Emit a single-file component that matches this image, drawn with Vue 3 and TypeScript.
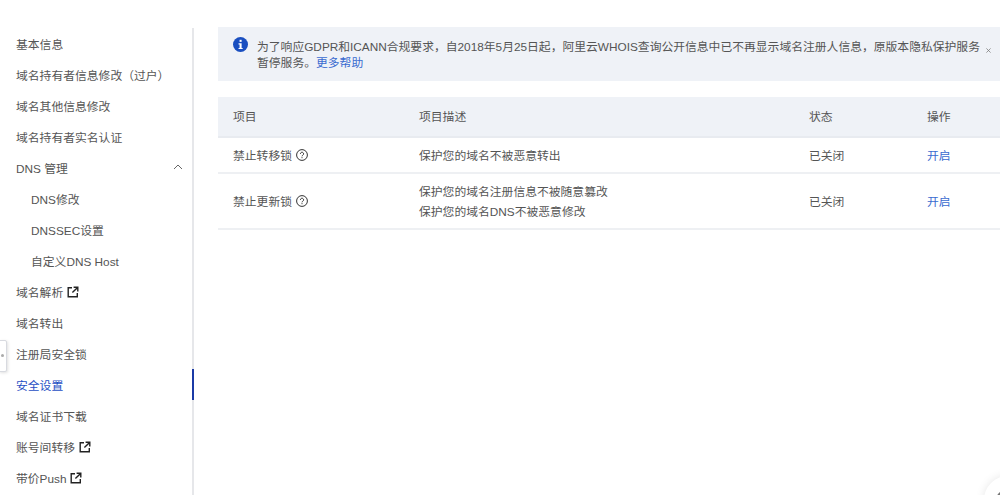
<script setup lang="ts">
interface NavItem { label: string; sub?: boolean; ext?: boolean; active?: boolean; caret?: boolean }
const nav: NavItem[] = [
  { label: '基本信息' },
  { label: '域名持有者信息修改（过户）' },
  { label: '域名其他信息修改' },
  { label: '域名持有者实名认证' },
  { label: 'DNS 管理', caret: true },
  { label: 'DNS修改', sub: true },
  { label: 'DNSSEC设置', sub: true },
  { label: '自定义DNS Host', sub: true },
  { label: '域名解析', ext: true },
  { label: '域名转出' },
  { label: '注册局安全锁' },
  { label: '安全设置', active: true },
  { label: '域名证书下载' },
  { label: '账号间转移', ext: true },
  { label: '带价Push', ext: true },
]
</script>

<template>
  <div class="page">
    <aside class="side">
      <a v-for="n in nav" :key="n.label" class="item" :class="{ sub: n.sub, active: n.active }">
        <span>{{ n.label }}</span>
        <svg v-if="n.ext" class="ext" width="12" height="12" viewBox="0 0 12 12" fill="none" stroke="#222" stroke-width="1.4">
          <path d="M5 1.7H1.2v9.1h9.1V7" />
          <path d="M6.6 1.2h4.2v4.2M10.6 1.4L5.4 6.6" />
        </svg>
        <svg v-if="n.caret" class="caret" width="10" height="6" viewBox="0 0 10 6" fill="none" stroke="#666" stroke-width="1">
          <path d="M1 5l4-4 4 4" />
        </svg>
      </a>
    </aside>
    <main class="main">
      <div class="alert">
        <svg class="info" width="16" height="16" viewBox="0 0 16 16">
          <circle cx="8" cy="8" r="8" fill="#1a4fc0" />
          <rect x="7" y="3" width="2.2" height="2.2" fill="#fff" />
          <path d="M5.9 6.6h3.3v5h1.1v1.3H5.9v-1.3h1.1V7.9H5.9z" fill="#fff" />
        </svg>
        <p class="alert-text">为了响应GDPR和ICANN合规要求，自2018年5月25日起，阿里云WHOIS查询公开信息中已不再显示域名注册人信息，原版本隐私保护服务<br />暂停服务。<a class="link">更多帮助</a></p>
        <svg class="close" width="5" height="5" viewBox="0 0 6 6" stroke="#777" stroke-width="0.9">
          <path d="M.5.5l5 5M5.5.5l-5 5" />
        </svg>
      </div>
      <div class="table">
        <div class="row head">
          <div>项目</div><div>项目描述</div><div>状态</div><div>操作</div>
        </div>
        <div class="row r1">
          <div class="name">禁止转移锁
            <svg class="help" width="12" height="12" viewBox="0 0 12 12" fill="none" stroke="#333" stroke-width="1">
              <circle cx="6" cy="6" r="5.4" />
              <path d="M4.4 4.8a1.6 1.6 0 1 1 2.4 1.4c-.5.3-.8.6-.8 1.1" />
              <path d="M6 8.2v1" />
            </svg>
          </div>
          <div>保护您的域名不被恶意转出</div>
          <div>已关闭</div>
          <div><a class="link">开启</a></div>
        </div>
        <div class="row r2">
          <div class="name">禁止更新锁
            <svg class="help" width="12" height="12" viewBox="0 0 12 12" fill="none" stroke="#333" stroke-width="1">
              <circle cx="6" cy="6" r="5.4" />
              <path d="M4.4 4.8a1.6 1.6 0 1 1 2.4 1.4c-.5.3-.8.6-.8 1.1" />
              <path d="M6 8.2v1" />
            </svg>
          </div>
          <div class="desc"><span>保护您的域名注册信息不被随意篡改</span><span>保护您的域名DNS不被恶意修改</span></div>
          <div>已关闭</div>
          <div><a class="link">开启</a></div>
        </div>
      </div>
    </main>
    <div class="handle"><i></i></div>
    <div class="fab"></div>
  </div>
</template>

<style scoped>
.page {
  position: relative;
  display: flex;
  width: 1000px;
  height: 495px;
  overflow: hidden;
  background: #fff;
  font-family: "Liberation Sans", "Noto Sans CJK SC", sans-serif;
  font-size: 11.8px;
  color: #555;
}
.side {
  box-sizing: border-box;
  width: 194px;
  flex: none;
  margin-top: 28px;
  border-right: 2px solid #e6e7ea;
}
.item {
  position: relative;
  display: flex;
  align-items: center;
  gap: 4px;
  height: 31px;
  padding-left: 16px;
  margin-right: -2px;
}
.item.sub { padding-left: 31px; }
.item.active { color: #1f4fc4; }
.item.active::after {
  content: "";
  position: absolute;
  right: 0;
  top: 0;
  width: 2px;
  height: 31px;
  background: #1b3aa6;
}
.ext { margin-top: 1px; }
.caret { position: absolute; left: 173px; top: 12px; }
.main {
  flex: 1;
  min-width: 0;
  padding: 27px 0 0 24px;
}
.alert {
  box-sizing: border-box;
  position: relative;
  display: flex;
  height: 54px;
  padding: 10px 0 0 15px;
  background: #eff2f7;
}
.info { flex: none; width: 15px; height: 15px; margin-right: 9px; }
.alert-text {
  margin: 2px 0 0;
  line-height: 16px;
  white-space: nowrap;
  color: #555;
}
.close { position: absolute; left: 768px; top: 21px; }
.link { color: #3a6bd0; }
.table { margin-top: 16px; }
.row {
  display: grid;
  grid-template-columns: 186px 390px 118px 1fr;
  align-items: center;
  padding-left: 15px;
  border-bottom: 2px solid #eef0f3;
  box-sizing: border-box;
}
.head { height: 41px; padding-bottom: 2px; background: #eff2f7; border-bottom-color: #e8ebf0; }
.r1 { height: 36px; padding-bottom: 2px; }
.r2 { height: 56px; padding-bottom: 2px; }
.name { display: flex; align-items: center; gap: 4px; }
.help { margin-top: 1px; }
.desc { display: flex; flex-direction: column; gap: 5px; line-height: 15px; margin-top: 4px; }
.handle {
  position: absolute;
  left: -1px;
  top: 340px;
  box-sizing: border-box;
  width: 8px;
  height: 32px;
  background: #fff;
  border: 1px solid #d8dae0;
  border-radius: 0 2px 2px 0;
  box-shadow: 1px 1px 3px rgba(0, 0, 0, 0.12);
}
.handle i {
  position: absolute;
  left: 1px;
  top: 13px;
  width: 3px;
  height: 3px;
  border-radius: 50%;
  background: #aaa;
}
.fab {
  position: absolute;
  left: 984px;
  top: 476px;
  width: 48px;
  height: 48px;
  border-radius: 50%;
  background: #fff;
  box-shadow: 0 0 10px rgba(0, 0, 0, 0.1);
}
.fab::after {
  content: "";
  position: absolute;
  left: 12px;
  top: 14px;
  width: 16px;
  height: 16px;
  border: 2px solid #777;
  border-radius: 50%;
}
</style>
